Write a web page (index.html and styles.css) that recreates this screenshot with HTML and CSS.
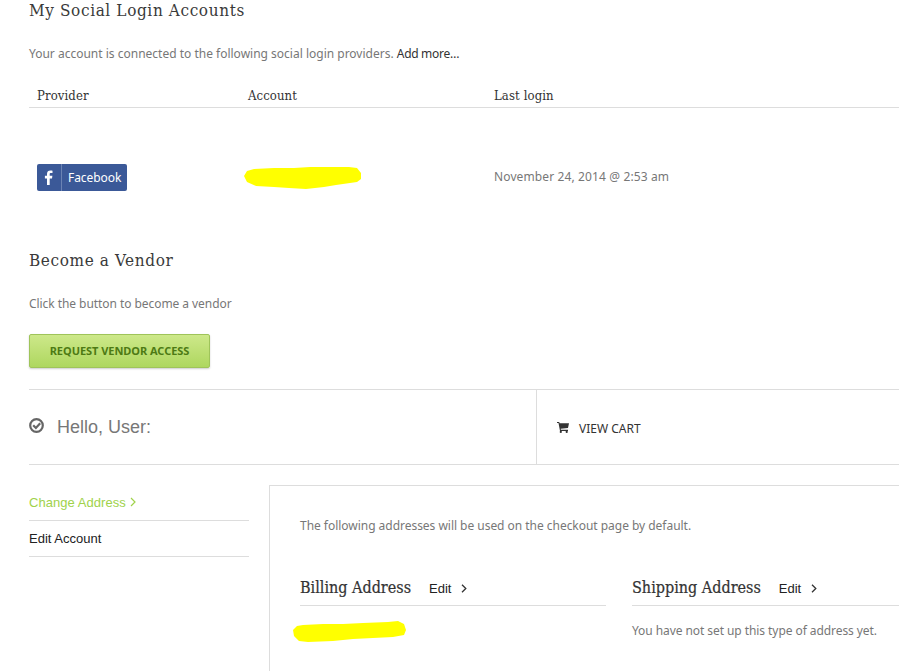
FILE: index.html
```html
<!DOCTYPE html>
<html lang="en">
<head>
<meta charset="utf-8">
<title>My Account</title>
<link rel="stylesheet" href="styles.css">
</head>
<body>
<main class="page">
  <section class="social">
    <h2 class="heading">My Social Login Accounts</h2>
    <p class="copy intro">Your account is connected to the following social login providers. <a class="more" href="#">Add more…</a></p>
    <div class="table-head">
      <span class="col-provider">Provider</span>
      <span class="col-account">Account</span>
      <span>Last login</span>
    </div>
    <div class="table-row">
      <span class="col-provider">
        <a class="fb" href="#">
          <span class="fb-icon"><svg width="10" height="15" viewBox="0 0 10 15"><path fill="#fff" d="M3 15V8.400H.9V5.800H3V4C3 1.700 4.300.6 6.400.6c1 0 1.800.1 2.100.1v2.400H7c-1.100 0-1.300.5-1.300 1.300v1.400h2.700l-.4 2.600H5.700V15z"/></svg></span>
          <span class="fb-label">Facebook</span>
        </a>
      </span>
      <span class="col-account">
        <svg class="scribble-a" width="118" height="23" viewBox="0 0 118 23"><path fill="#ff0" d="M10 2 30 1 50 1 66 0 105 0 113 1 117 6 117 12 113 15 92 18 80 20 62 22 45 21 30 20 12 19 3 15 0 9 3 4z"/></svg>
      </span>
      <span class="date">November 24, 2014 @ 2:53 am</span>
    </div>
  </section>

  <section class="vendor">
    <h2 class="heading">Become a Vendor</h2>
    <p class="copy vendor-copy">Click the button to become a vendor</p>
    <a class="vendor-btn" href="#">Request Vendor Access</a>
  </section>

  <section class="hello-bar">
    <div class="hello">
      <svg class="check" width="15" height="15" viewBox="0 0 15 15"><circle cx="7.500" cy="7.500" r="6.300" fill="none" stroke="#666" stroke-width="2.200"/><path d="M4.200 7.200 6.900 10 11.200 5.300" fill="none" stroke="#666" stroke-width="2.200"/></svg>
      <span>Hello, User:</span>
    </div>
    <a class="cart" href="#">
      <svg width="12" height="11" viewBox="0 0 12 11"><path fill="#333" d="M0 0h2.200l.4 1.300H12l-1 4.700-7.300.8.200 1H11v1.100H3L1.500 1.100H0z"/><circle cx="3.800" cy="9.900" r="1.100" fill="#333"/><circle cx="9.700" cy="9.900" r="1.100" fill="#333"/></svg>
      <span>VIEW CART</span>
    </a>
  </section>

  <section class="account">
    <nav class="side">
      <a class="side-link active" href="#">Change Address <svg class="chev" width="6" height="10" viewBox="0 0 6 10"><path d="M1 1 5 5 1 9" fill="none" stroke="#a0d24b" stroke-width="1.200"/></svg></a>
      <a class="side-link" href="#">Edit Account</a>
    </nav>
    <div class="panel">
      <p class="copy panel-copy">The following addresses will be used on the checkout page by default.</p>
      <div class="addresses">
        <div class="address">
          <div class="address-head">
            <h3 class="address-title">Billing Address</h3>
            <a class="edit" href="#">Edit <svg width="6" height="9" viewBox="0 0 6 9"><path d="M1 .8 4.800 4.500 1 8.200" fill="none" stroke="#333" stroke-width="1.300"/></svg></a>
          </div>
          <svg class="scribble-b" width="113" height="21" viewBox="0 0 113 21"><path fill="#ff0" d="M10 4 30 3 50 3 70 2 95 1 105 0 111 3 113 9 111 14 100 16 80 17 60 18 40 20 15 21 6 20 1 15 0 9 4 5z"/></svg>
        </div>
        <div class="address ship">
          <div class="address-head">
            <h3 class="address-title">Shipping Address</h3>
            <a class="edit" href="#">Edit <svg width="6" height="9" viewBox="0 0 6 9"><path d="M1 .8 4.800 4.500 1 8.200" fill="none" stroke="#333" stroke-width="1.300"/></svg></a>
          </div>
          <p class="copy none">You have not set up this type of address yet.</p>
        </div>
      </div>
    </div>
  </section>
</main>
</body>
</html>
```
FILE: styles.css
```css
html, body { margin: 0; padding: 0; background: #fff; }
body { width: 899px; height: 671px; overflow: hidden; font-family: "Noto Sans", sans-serif; color: #777; }
a { text-decoration: none; }
.page { padding-left: 29px; }
.heading { margin: 0; height: 20px; font: 400 17px/20px "DejaVu Serif Condensed", "DejaVu Serif", serif; letter-spacing: .62px; color: #3a3a3a; }
.copy { margin: 0; font-size: 12px; line-height: 18px; color: #777; }
.social { height: 232px; }
.intro { margin-top: 25px; }
.more { color: #333; letter-spacing: -.3px; }
.table-head { display: flex; margin-top: 23px; height: 22px; box-sizing: border-box; border-bottom: 1px solid #ddd; padding-left: 8px; font: 400 13px/20px "DejaVu Serif Condensed", "DejaVu Serif", serif; letter-spacing: .1px; color: #333; width: 870px; }
.col-provider { width: 211px; flex: none; }
.col-account { width: 246px; flex: none; }
.table-row { display: flex; align-items: center; padding-left: 8px; margin-top: 56px; height: 27px; }
.table-row .col-account { height: 27px; }
.scribble-a { display: block; margin: 3px 0 0 -4px; }
.date { font-size: 12px; letter-spacing: .12px; color: #777; transform: translateY(-1px); }
.fb { display: flex; width: 90px; height: 27px; background: #3b5998; border-radius: 2px; color: #fff; font-size: 12px; letter-spacing: -.05px; line-height: 27px; }
.fb-icon { width: 24px; flex: none; display: flex; align-items: center; justify-content: center; border-right: 1px solid #6b83b3; }
.fb-label { padding-left: 6px; }
.vendor { height: 157px; padding-top: 18px; box-sizing: border-box; }
.vendor-copy { margin-top: 25px; letter-spacing: -.06px; }
.vendor-btn { display: block; width: 181px; height: 34px; margin-top: 21px; box-sizing: border-box; border: 1px solid #9fc45a; border-radius: 2px; background: linear-gradient(#cde88a, #aed75f); box-shadow: 0 1px 2px rgba(0,0,0,.2); color: #4d7a14; font-size: 11px; font-weight: 700; line-height: 32px; text-align: center; text-transform: uppercase; letter-spacing: -.04px; }
.hello-bar { display: flex; height: 76px; box-sizing: border-box; border-top: 1px solid #ddd; border-bottom: 1px solid #ddd; width: 870px; }
.hello { width: 507px; flex: none; display: flex; align-items: center; gap: 13px; border-right: 1px solid #ddd; font: 18px "Liberation Sans", sans-serif; color: #777; }
.check { margin-top: -4px; }
.cart { display: flex; align-items: center; gap: 10px; padding: 2px 0 0 20px; font-size: 12px; color: #333; }
.cart svg { margin-top: -2px; }
.account { display: flex; margin-top: 20px; }
.side { width: 220px; flex: none; margin-right: 20px; display: flex; flex-direction: column; }
.side-link { height: 36px; box-sizing: border-box; border-bottom: 1px solid #ddd; font: 13px/35px "Liberation Sans", sans-serif; color: #222; }
.active { color: #a0d24b; letter-spacing: .05px; }
.chev { margin-left: 1px; }
.panel { flex: none; width: 630px; height: 186px; box-sizing: border-box; border: 1px solid #ddd; border-width: 1px 0 0 1px; padding: 31px 0 0 30px; }
.panel-copy { letter-spacing: -.03px; }
.addresses { display: flex; gap: 26px; margin-top: 36px; }
.address { width: 306px; flex: none; }
.ship { width: 267px; }
.address-head { display: flex; align-items: center; gap: 18px; height: 35px; box-sizing: border-box; border-bottom: 1px solid #ddd; }
.address-title { margin: 0; height: 26px; font: 400 16px/26px "DejaVu Serif Condensed", "DejaVu Serif", serif; color: #333; -webkit-text-stroke: .2px #333; }
.edit { font: 13px "Liberation Sans", sans-serif; color: #222; }
.edit svg { margin-left: 6px; }
.scribble-b { display: block; margin: 15px 0 0 -7px; }
.none { margin-top: 16px; letter-spacing: -.07px; }
```
